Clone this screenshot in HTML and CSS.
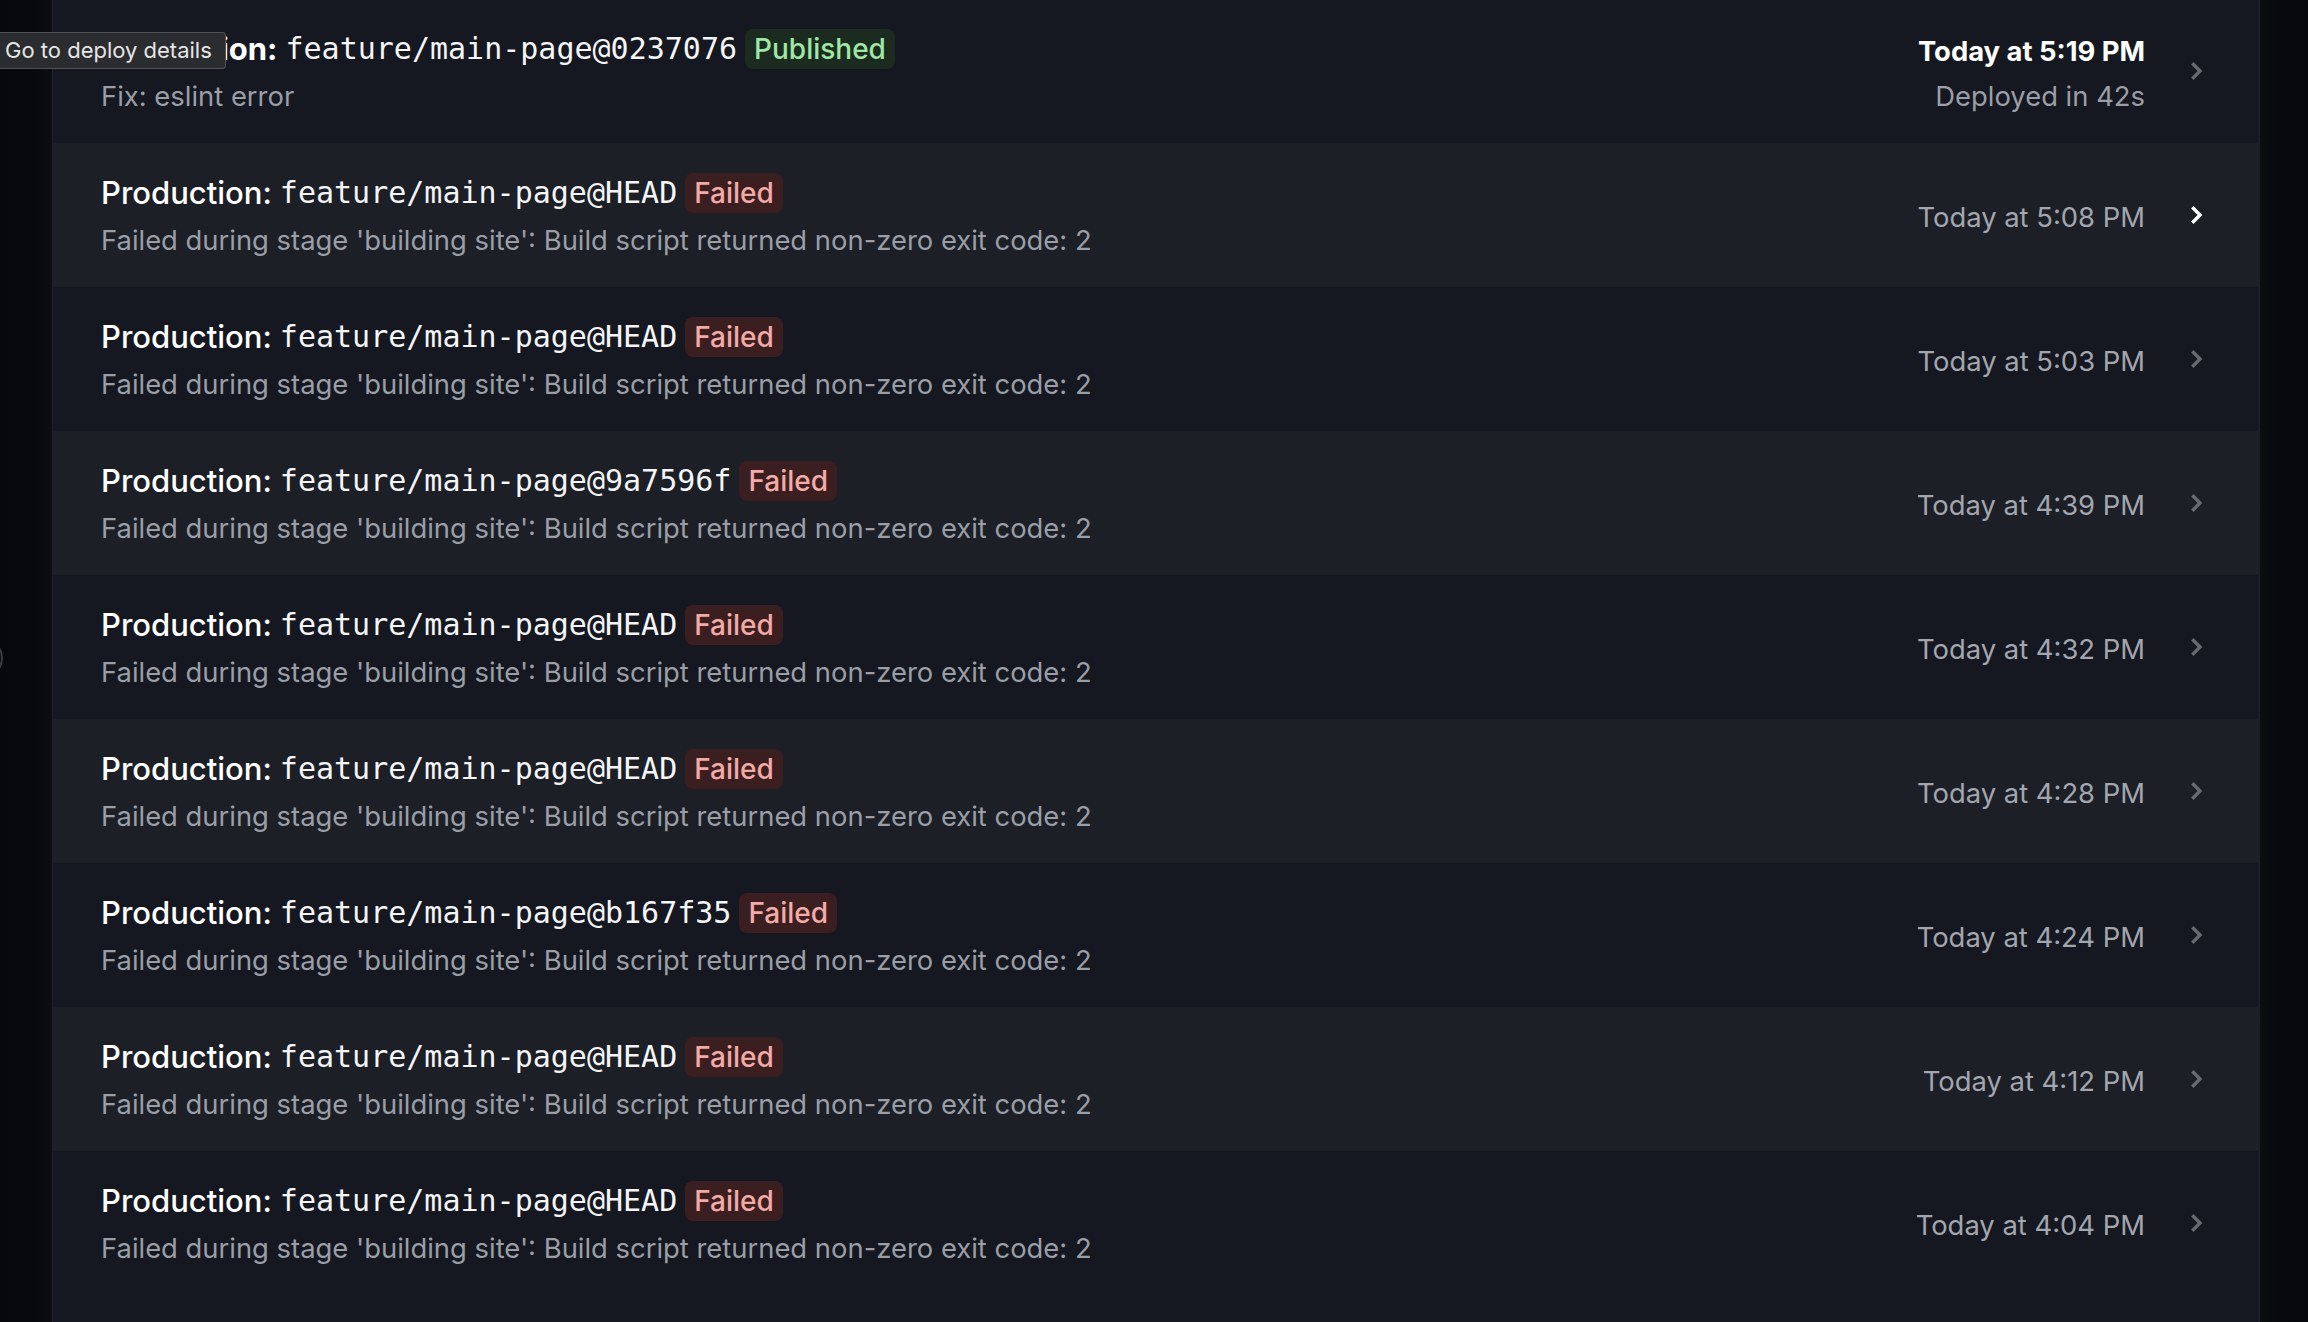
FILE: index.html
```html
<!DOCTYPE html>
<html lang="en">
<head>
<meta charset="utf-8">
<title>Deploys</title>
<link rel="stylesheet" href="styles.css">
</head>
<body>
<div class="edge edge-left"><span class="collapse-btn"></span></div>
<main class="panel">
  <ul class="deploys">
    <li class="deploy latest">
      <div class="info">
        <div class="title"><span class="env">Production:</span> <code>feature/main-page@0237076</code> <span class="badge published">Published</span></div>
        <div class="sub">Fix: eslint error</div>
      </div>
      <div class="meta">
        <div class="date">Today at 5:19 PM</div>
        <div class="dur">Deployed in 42s</div>
      </div>
      <svg class="chev" viewBox="0 0 12 18"><path d="M2.5 2.5 L9 9 L2.5 15.5"/></svg>
      <div class="tooltip">Go to deploy details</div>
    </li>
    <li class="deploy alt hover">
      <div class="info">
        <div class="title"><span class="env">Production:</span> <code>feature/main-page@HEAD</code> <span class="badge failed">Failed</span></div>
        <div class="sub">Failed during stage 'building site': Build script returned non-zero exit code: 2</div>
      </div>
      <div class="meta"><div class="date">Today at 5:08 PM</div></div>
      <svg class="chev" viewBox="0 0 12 18"><path d="M2.5 2.5 L9 9 L2.5 15.5"/></svg>
    </li>
    <li class="deploy">
      <div class="info">
        <div class="title"><span class="env">Production:</span> <code>feature/main-page@HEAD</code> <span class="badge failed">Failed</span></div>
        <div class="sub">Failed during stage 'building site': Build script returned non-zero exit code: 2</div>
      </div>
      <div class="meta"><div class="date">Today at 5:03 PM</div></div>
      <svg class="chev" viewBox="0 0 12 18"><path d="M2.5 2.5 L9 9 L2.5 15.5"/></svg>
    </li>
    <li class="deploy alt">
      <div class="info">
        <div class="title"><span class="env">Production:</span> <code>feature/main-page@9a7596f</code> <span class="badge failed">Failed</span></div>
        <div class="sub">Failed during stage 'building site': Build script returned non-zero exit code: 2</div>
      </div>
      <div class="meta"><div class="date">Today at 4:39 PM</div></div>
      <svg class="chev" viewBox="0 0 12 18"><path d="M2.5 2.5 L9 9 L2.5 15.5"/></svg>
    </li>
    <li class="deploy">
      <div class="info">
        <div class="title"><span class="env">Production:</span> <code>feature/main-page@HEAD</code> <span class="badge failed">Failed</span></div>
        <div class="sub">Failed during stage 'building site': Build script returned non-zero exit code: 2</div>
      </div>
      <div class="meta"><div class="date">Today at 4:32 PM</div></div>
      <svg class="chev" viewBox="0 0 12 18"><path d="M2.5 2.5 L9 9 L2.5 15.5"/></svg>
    </li>
    <li class="deploy alt">
      <div class="info">
        <div class="title"><span class="env">Production:</span> <code>feature/main-page@HEAD</code> <span class="badge failed">Failed</span></div>
        <div class="sub">Failed during stage 'building site': Build script returned non-zero exit code: 2</div>
      </div>
      <div class="meta"><div class="date">Today at 4:28 PM</div></div>
      <svg class="chev" viewBox="0 0 12 18"><path d="M2.5 2.5 L9 9 L2.5 15.5"/></svg>
    </li>
    <li class="deploy">
      <div class="info">
        <div class="title"><span class="env">Production:</span> <code>feature/main-page@b167f35</code> <span class="badge failed">Failed</span></div>
        <div class="sub">Failed during stage 'building site': Build script returned non-zero exit code: 2</div>
      </div>
      <div class="meta"><div class="date">Today at 4:24 PM</div></div>
      <svg class="chev" viewBox="0 0 12 18"><path d="M2.5 2.5 L9 9 L2.5 15.5"/></svg>
    </li>
    <li class="deploy alt">
      <div class="info">
        <div class="title"><span class="env">Production:</span> <code>feature/main-page@HEAD</code> <span class="badge failed">Failed</span></div>
        <div class="sub">Failed during stage 'building site': Build script returned non-zero exit code: 2</div>
      </div>
      <div class="meta"><div class="date">Today at 4:12 PM</div></div>
      <svg class="chev" viewBox="0 0 12 18"><path d="M2.5 2.5 L9 9 L2.5 15.5"/></svg>
    </li>
    <li class="deploy">
      <div class="info">
        <div class="title"><span class="env">Production:</span> <code>feature/main-page@HEAD</code> <span class="badge failed">Failed</span></div>
        <div class="sub">Failed during stage 'building site': Build script returned non-zero exit code: 2</div>
      </div>
      <div class="meta"><div class="date">Today at 4:04 PM</div></div>
      <svg class="chev" viewBox="0 0 12 18"><path d="M2.5 2.5 L9 9 L2.5 15.5"/></svg>
    </li>
  </ul>
</main>
<div class="edge edge-right"></div>
</body>
</html>
```

FILE: styles.css
```css
* { box-sizing: border-box; }
html, body { height: 100%; }
body {
  margin: 0;
  display: flex;
  background: #07090c;
  font-family: Inter, "Noto Sans", "Liberation Sans", sans-serif;
  color: #ffffff;
  overflow: hidden;
}
.edge {
  flex: 0 0 52px;
  position: relative;
}
.edge-left {
  background: linear-gradient(to right, #06080b 0%, #07090c 70%, #0c0e12 100%);
}
.edge-right {
  flex-basis: 48px;
  background: linear-gradient(to right, #0c0e12 0%, #07090c 40%, #06080b 100%);
}
.collapse-btn {
  position: absolute;
  left: -37px;
  top: 638px;
  width: 40px;
  height: 40px;
  border: 2px solid #3c3f45;
  border-radius: 50%;
}
.panel {
  flex: 1;
  background: #151820;
  border-left: 1px solid #1e2127;
  border-right: 2px solid #1c1f25;
}
.deploys {
  list-style: none;
  margin: -1px 0 0;
  padding: 0;
}
.deploy {
  position: relative;
  height: 144px;
  display: flex;
  align-items: center;
  padding: 0 55px 0 48px;
  background: #151820;
}
.deploy.alt { background: #1c1f26; }
.info {
  flex: 1;
  display: flex;
  flex-direction: column;
  gap: 9px;
  min-width: 0;
}
.title {
  display: flex;
  align-items: center;
  gap: 8px;
  font-size: 31px;
  font-weight: 500;
  line-height: 40px;
  white-space: nowrap;
}
.latest .title { font-weight: 700; }
.title code {
  font-family: "DejaVu Sans Mono", "Liberation Mono", monospace;
  font-size: 30px;
  font-weight: 400;
  color: #f4f5f6;
}
.badge {
  display: inline-block;
  height: 40px;
  line-height: 40px;
  padding: 0 9px;
  border-radius: 8px;
  font-size: 28px;
  font-weight: 500;
}
.badge.failed { background: #3b1f20; color: #f4aba7; }
.badge.published { background: #1b2b1f; color: #9fe7a5; }
.sub {
  font-size: 27.4px;
  line-height: 36px;
  color: #9a9ea6;
  white-space: nowrap;
}
.meta {
  display: flex;
  flex-direction: column;
  align-items: flex-end;
  gap: 9px;
  margin-top: 4px;
  margin-right: 46px;
}
.date {
  font-size: 27.4px;
  line-height: 36px;
  color: #a2a6ae;
}
.latest .date { color: #ffffff; font-weight: 700; }
.dur {
  font-size: 27.4px;
  line-height: 36px;
  color: #9a9ea6;
}
.chev {
  width: 12px;
  height: 18px;
  flex: 0 0 12px;
  fill: none;
  stroke: #676a70;
  stroke-width: 3.4;
  stroke-linecap: square;
  stroke-linejoin: miter;
}
.hover .chev { stroke: #ffffff; }
.tooltip {
  position: absolute;
  z-index: 5;
  top: 33px;
  left: -58px;
  height: 37px;
  line-height: 35px;
  padding: 0 13px 0 9px;
  background: #2b2c2f;
  border: 1px solid #505154;
  border-radius: 3px;
  color: #e6e6e6;
  font-size: 22px;
  white-space: nowrap;
}
```
